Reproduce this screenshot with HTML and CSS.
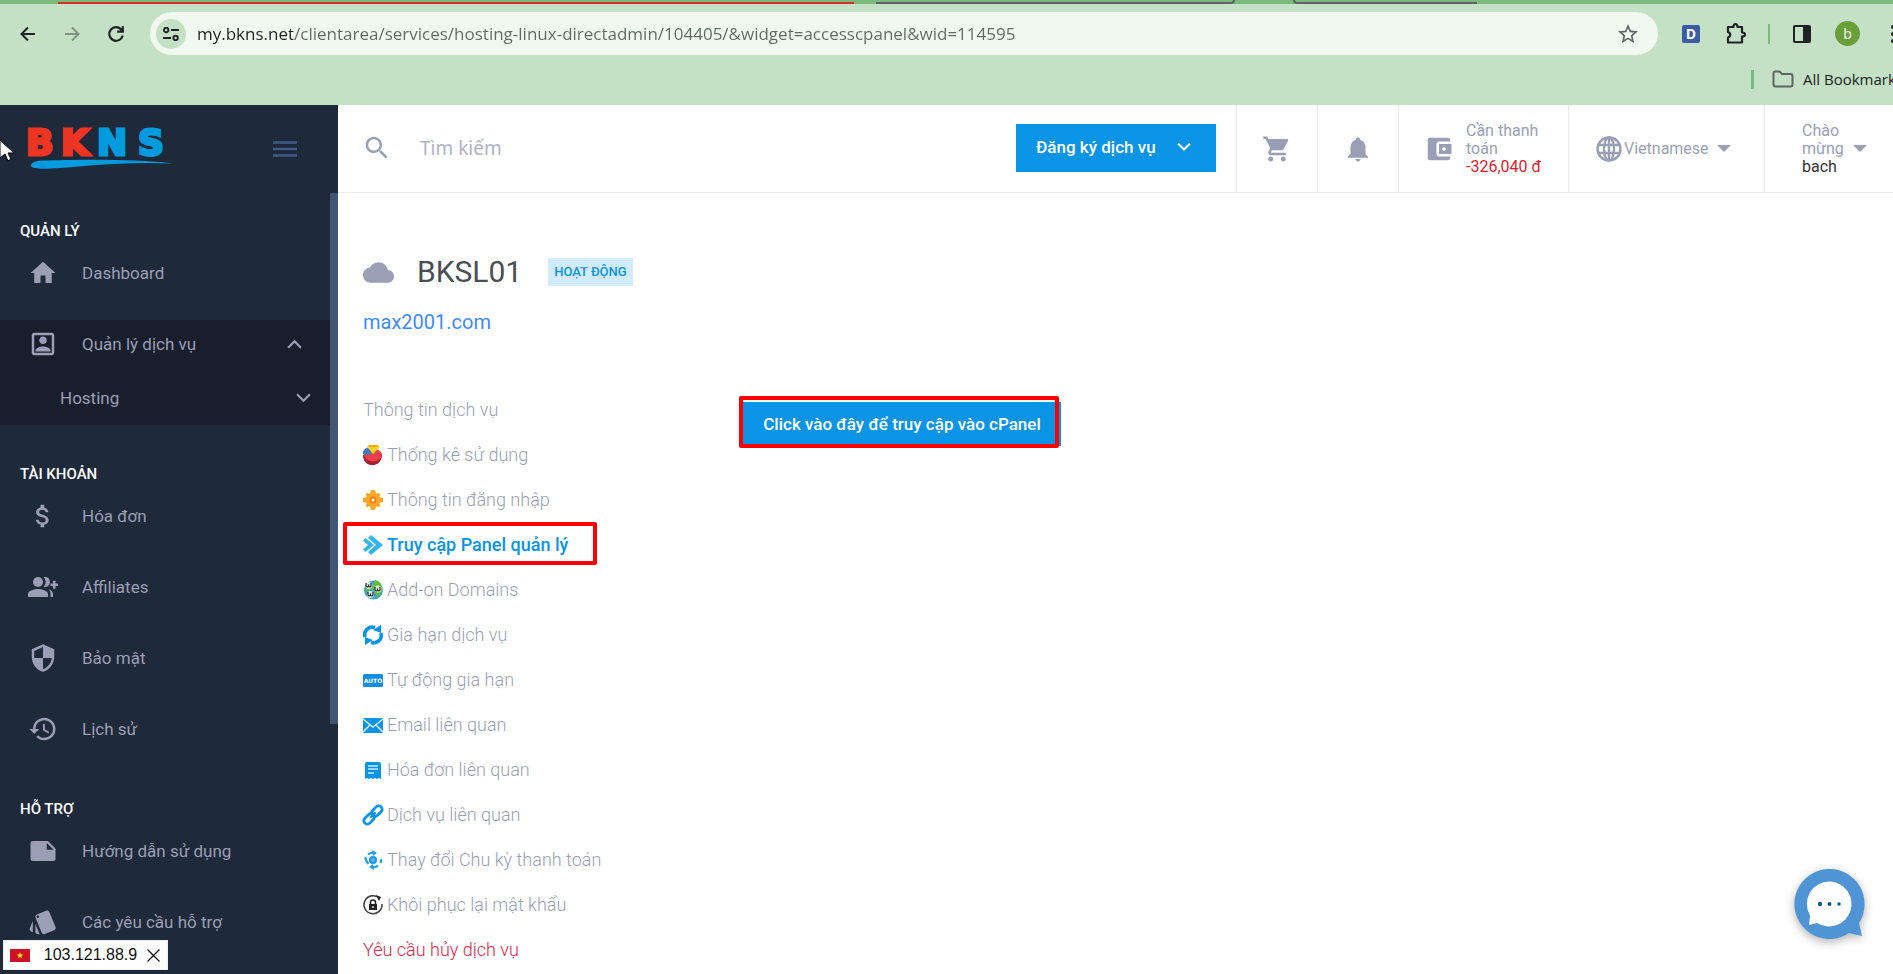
FILE: index.html
```html
<!DOCTYPE html>
<html lang="vi">
<head>
<meta charset="utf-8">
<title>BKNS - BKSL01</title>
<link rel="stylesheet" href="styles.css">
</head>
<body>
<div class="window">
  <div class="browser">
    <div class="tabstrip">
      <span class="group-line"></span>
      <span class="tab-left"></span>
      <span class="tab-right"></span>
    </div>
    <div class="toolbar">
      <button class="nav-btn" aria-label="Back"><svg width="16" height="16" viewBox="0 0 16 16"><path d="M15 8H2M8 1.5 1.5 8 8 14.500" fill="none" stroke="#202124" stroke-width="2"/></svg></button>
      <button class="nav-btn faded" aria-label="Forward"><svg width="16" height="16" viewBox="0 0 16 16"><path d="M1 8h13M8 1.500 14.500 8 8 14.500" fill="none" stroke="#202124" stroke-width="2"/></svg></button>
      <button class="nav-btn" aria-label="Reload"><svg width="18" height="18" viewBox="0 0 18 18"><path d="M14.600 5A6.800 6.800 0 1 0 15.700 10.500M15.800 1v5.600h-5.600" fill="none" stroke="#202124" stroke-width="2.200"/></svg></button>
      <div class="address">
        <button class="site-info" aria-label="Site information"><svg width="16" height="14" viewBox="0 0 16 14"><g fill="none" stroke="#202124" stroke-width="1.900"><circle cx="3.200" cy="3" r="2.200"/><path d="M8 3h8M0 11h8"/><circle cx="12.600" cy="11" r="2.200"/></g></svg></button>
        <input class="url" type="text" aria-label="Address" value="my.bkns.net/clientarea/services/hosting-linux-directadmin/104405/&amp;widget=accesscpanel&amp;wid=114595">
        <button class="star" aria-label="Bookmark"><svg width="24" height="24" viewBox="0 0 24 24"><path fill="#5f6368" d="M22 9.240l-7.190-.62L12 2 9.190 8.630 2 9.240l5.460 4.730L5.820 21 12 17.270 18.180 21l-1.630-7.030L22 9.240zM12 15.400l-3.760 2.270 1-4.280-3.320-2.880 4.380-.38L12 6.100l1.710 4.040 4.380.38-3.320 2.880 1 4.280L12 15.400z"/></svg></button>
      </div>
      <div class="extensions">
        <button class="ext ext-d" aria-label="Extension D">D</button>
        <button class="ext puzzle" aria-label="Extensions"><svg width="24" height="24" viewBox="0 0 24 24"><path d="M4 5h5.500c0-4 4-4 4 0H18v5.500c4 0 4 4 0 4V20.500H4V15.500c3-1 3-4.500 0-5.500z" fill="none" stroke="#202124" stroke-width="2.200" stroke-linejoin="round"/></svg></button>
        <span class="tool-sep"></span>
        <button class="ext panel" aria-label="Side panel"><svg width="18" height="18" viewBox="0 0 18 18"><rect x="1" y="1" width="16" height="16" rx="1" fill="none" stroke="#202124" stroke-width="2"/><path fill="#202124" d="M10 1h7v16h-7z"/></svg></button>
        <button class="ext avatar" aria-label="Profile">b</button>
        <button class="ext kebab" aria-label="Menu"><svg width="6" height="20" viewBox="0 0 6 20"><g fill="#202124"><circle cx="3" cy="3" r="2"/><circle cx="3" cy="10" r="2"/><circle cx="3" cy="17" r="2"/></g></svg></button>
      </div>
    </div>
    <div class="bookmarks">
      <span class="mark-sep"></span>
      <button class="all-marks"><svg width="22" height="18" viewBox="0 0 22 18"><path d="M1.500 3.500q0-2 2-2h4l2.500 2.500h8.500q2 0 2 2v8.500q0 2-2 2h-15q-2 0-2-2z" fill="none" stroke="#5f6368" stroke-width="2"/></svg><span>All Bookmarks</span></button>
    </div>
  </div>

  <div class="app">
    <aside class="sidebar">
      <div class="brand">
        <a href="#" class="logo" aria-label="BKNS"><svg width="148" height="44" viewBox="0 0 148 44"><g class="logo-text"><text class="red" x="-1 34" y="30">BK</text><text class="blue" x="70 111" y="30">NS</text></g><path fill="#009ade" d="M147 38.500C103 33 43 35 15 35.500 7 36 3 38.500 4 41c1 2.500 8 3 20 2.500C53 42 93 36 147 38.500z"/></svg></a>
        <button class="burger" aria-label="Toggle menu"><svg width="24" height="16" viewBox="0 0 24 16"><path d="M0 1.500h24M0 8h24M0 14.500h24" stroke="#415a85" stroke-width="2.600"/></svg></button>
      </div>
      <nav class="side-nav">
        <h2>QUẢN LÝ</h2>
        <a href="#" class="side-item"><svg class="mi" viewBox="0 0 24 24"><path d="M10 20v-6h4v6h5v-8h3L12 3 2 12h3v8z"/></svg><span>Dashboard</span></a>
        <div class="side-open">
          <a href="#" class="side-item"><svg class="mi" viewBox="0 0 24 24"><path d="M19 5v14H5V5h14m0-2H5c-1.100 0-2 .9-2 2v14c0 1.100.9 2 2 2h14c1.100 0 2-.9 2-2V5c0-1.100-.9-2-2-2zm-7 9c1.650 0 3-1.350 3-3s-1.350-3-3-3-3 1.350-3 3 1.350 3 3 3zm6 6H6v-1c0-2 4-3.100 6-3.100s6 1.100 6 3.100v1z"/></svg><span>Quản lý dịch vụ</span><svg class="chev" viewBox="0 0 14 9"><path d="M1 8l6-6 6 6"/></svg></a>
          <a href="#" class="side-sub"><span>Hosting</span><svg class="chev" viewBox="0 0 14 9"><path d="M1 1l6 6 6-6"/></svg></a>
        </div>
        <h2>TÀI KHOẢN</h2>
        <a href="#" class="side-item"><svg class="mi" viewBox="0 0 24 24"><path d="M11.800 10.900c-2.270-.59-3-1.200-3-2.150 0-1.090 1.010-1.850 2.700-1.850 1.780 0 2.440.85 2.500 2.100h2.210c-.07-1.720-1.120-3.300-3.210-3.810V3h-3v2.160c-1.940.42-3.500 1.680-3.500 3.610 0 2.310 1.910 3.460 4.700 4.130 2.500.6 3 1.480 3 2.410 0 .69-.49 1.790-2.700 1.790-2.060 0-2.870-.92-2.980-2.100h-2.200c.12 2.190 1.760 3.420 3.680 3.830V21h3v-2.150c1.950-.37 3.500-1.500 3.500-3.550 0-2.840-2.430-3.810-4.700-4.400z"/></svg><span>Hóa đơn</span></a>
        <a href="#" class="side-item"><svg class="mi" viewBox="0 0 24 24"><circle cx="8" cy="8" r="4"/><path d="M0 20v-2.500c0-2.700 5.300-4 8-4s8 1.300 8 4V20zM12.500 4.200c3.600-.8 5 1.700 5 3.800s-1.400 4.600-5 3.800c2.200-2.300 2.200-5.300 0-7.600zM16.500 13.700c2 .8 3.500 2 3.500 3.800V20h-2v-2.500c0-1.600-.5-2.800-1.500-3.800zM20 7h2v2.200h2v2h-2v2.200h-2v-2.200h-2v-2h2z"/></svg><span>Affiliates</span></a>
        <a href="#" class="side-item"><svg class="mi" viewBox="0 0 24 24"><path d="M12 1L3 5v6c0 5.550 3.840 10.740 9 12 5.160-1.260 9-6.450 9-12V5l-9-4zm0 10.990h7c-.53 4.120-3.280 7.790-7 8.940V12H5V6.300l7-3.110v8.800z"/></svg><span>Bảo mật</span></a>
        <a href="#" class="side-item"><svg class="mi" viewBox="0 0 24 24"><path d="M13 3c-4.970 0-9 4.030-9 9H1l3.890 3.890.07.140L9 12H6c0-3.870 3.130-7 7-7s7 3.130 7 7-3.130 7-7 7c-1.930 0-3.680-.79-4.940-2.060l-1.420 1.420C8.270 19.990 10.510 21 13 21c4.970 0 9-4.030 9-9s-4.030-9-9-9zm-1 5v5l4.280 2.540.72-1.210-3.500-2.080V8H12z"/></svg><span>Lịch sử</span></a>
        <h2>HỖ TRỢ</h2>
        <a href="#" class="side-item"><svg class="mi" viewBox="0 0 24 24"><path d="M4 4h12l6 6v8q0 2-2 2H4q-2 0-2-2V6q0-2 2-2zm11 1.500V11h5.500z" fill-rule="evenodd"/></svg><span>Hướng dẫn sử dụng</span></a>
        <a href="#" class="side-item"><svg class="mi" viewBox="0 0 24 24"><path d="M2.530 19.650l1.340.56v-9.030l-2.430 5.860c-.41 1.020.08 2.190 1.090 2.610zm19.500-3.700L17.070 3.980c-.31-.75-1.040-1.210-1.810-1.230-.26 0-.53.04-.79.15L7.100 5.950c-.75.31-1.210 1.030-1.230 1.800-.01.27.04.54.15.8l4.960 11.970c.31.76 1.050 1.220 1.830 1.230.26 0 .52-.05.77-.15l7.360-3.050c1.020-.42 1.510-1.590 1.090-2.600zM7.880 8.750c-.55 0-1-.45-1-1s.45-1 1-1 1 .45 1 1-.45 1-1 1zm-2 11c0 1.100.9 2 2 2h1.450l-3.450-8.340v6.340z"/></svg><span>Các yêu cầu hỗ trợ</span></a>
        <span class="scroll-thumb"></span>
      </nav>
    </aside>

    <div class="content">
      <header class="topbar">
        <label class="search"><svg width="30" height="30" viewBox="0 0 24 24"><path fill="#9a9fb5" d="M15.500 14h-.79l-.28-.27C15.410 12.590 16 11.110 16 9.500 16 5.910 13.090 3 9.500 3S3 5.910 3 9.500 5.910 16 9.500 16c1.610 0 3.090-.59 4.230-1.570l.27.28v.79l5 4.990L20.490 19l-4.990-5zm-6 0C7.010 14 5 11.990 5 9.500S7.010 5 9.500 5 14 7.010 14 9.500 11.990 14 9.500 14z"/></svg><input type="search" placeholder="Tìm kiếm" aria-label="Tìm kiếm"></label>
        <div class="order-cell"><button class="btn order"><span>Đăng ký dịch vụ</span><svg class="chev" viewBox="0 0 14 9"><path d="M1 1l6 6 6-6"/></svg></button></div>
        <button class="cell icon-cell" aria-label="Giỏ hàng"><svg class="mi" viewBox="0 0 24 24"><path d="M7 18c-1.100 0-1.990.9-1.990 2S5.900 22 7 22s2-.9 2-2-.9-2-2-2zM1 2v2h2l3.600 7.590-1.350 2.450c-.16.28-.25.61-.25.96 0 1.100.9 2 2 2h12v-2H7.420c-.14 0-.25-.11-.25-.25l.03-.12.9-1.630h7.450c.75 0 1.410-.41 1.750-1.030l3.580-6.490c.08-.14.12-.31.12-.48 0-.55-.45-1-1-1H5.210l-.94-2H1zm16 16c-1.100 0-1.990.9-1.990 2s.89 2 1.990 2 2-.9 2-2-.9-2-2-2z"/></svg></button>
        <button class="cell icon-cell" aria-label="Thông báo"><svg class="mi" viewBox="0 0 24 24"><path d="M12 22c1.100 0 2-.9 2-2h-4c0 1.100.89 2 2 2zm6-6v-5c0-3.070-1.640-5.640-4.500-6.320V4c0-.83-.67-1.500-1.500-1.500s-1.500.67-1.500 1.500v.68C7.630 5.360 6 7.920 6 11v5l-2 2v1h16v-1l-2-2z"/></svg></button>
        <a href="#" class="cell due"><svg class="mi" viewBox="0 0 24 24"><path d="M21 18v1c0 1.100-.9 2-2 2H5c-1.110 0-2-.9-2-2V5c0-1.100.89-2 2-2h14c1.100 0 2 .9 2 2v1h-9c-1.110 0-2 .9-2 2v8c0 1.100.89 2 2 2h9zm-9-2h10V8H12v8zm4-2.500c-.83 0-1.500-.67-1.500-1.500s.67-1.500 1.500-1.500 1.500.67 1.500 1.500-.67 1.500-1.500 1.500z"/></svg><span>Cần thanh<br>toán<br><b>-326,040 đ</b></span></a>
        <label class="cell lang"><svg width="26" height="26" viewBox="0 0 26 26"><g fill="none" stroke="#9a9fb5" stroke-width="2.400"><circle cx="13" cy="13" r="11.500"/><ellipse cx="13" cy="13" rx="5" ry="11.500"/><path d="M2 9h22M2 17h22M13 2v22"/></g></svg><select aria-label="Ngôn ngữ"><option>Vietnamese</option></select><i class="caret"></i></label>
        <button class="cell user"><span>Chào<br>mừng<br><b>bach</b></span><i class="caret"></i></button>
      </header>

      <main class="main">
        <div class="title-row">
          <svg class="cloud" width="31" height="31" viewBox="0 0 24 24"><path fill="#9a9fb5" d="M19.350 10.040C18.670 6.590 15.640 4 12 4 9.110 4 6.600 5.640 5.350 8.040 2.340 8.360 0 10.910 0 14c0 3.310 2.690 6 6 6h13c2.760 0 5-2.240 5-5 0-2.640-2.050-4.780-4.650-4.960z"/></svg>
          <h1>BKSL01</h1>
          <span class="badge">HOẠT ĐỘNG</span>
        </div>
        <a href="#" class="domain">max2001.com</a>
        <div class="columns">
          <nav class="service-nav">
            <a href="#">Thông tin dịch vụ</a>
            <a href="#"><svg viewBox="0 0 20 20"><path fill="#a81f2c" d="M0 10c0 14 19 13 19 0z"/><ellipse cx="10" cy="10" rx="9" ry="6.500" fill="#e8414b"/><path fill="#4378bd" d="M0 9V7c1-3 3-4 5-4.500L10 8l-6 2z"/><path fill="#ffd21f" d="M4 1.500C7-.5 13-.5 17 2l-7 7z"/><path fill="#f4a800" d="M6 0h9v2H6z"/></svg><span>Thống kê sử dụng</span></a>
            <a href="#"><svg viewBox="0 0 20 20"><g fill="#fba826"><circle cx="10" cy="10" r="7.500"/><path d="M8 0h4l1 4H7zM8 20h4l1-4H7zM0 8v4l4 1V7zM20 8v4l-4 1V7zM2.500 4.500l2-2 4 3-3 3zM17.500 4.500l-2-2-4 3 3 3zM2.500 15.500l2 2 4-3-3-3zM17.500 15.500l-2 2-4-3 3-3z"/></g><circle cx="10" cy="10" r="3.500" fill="#f27c1c"/><circle cx="10" cy="10" r="1.500" fill="#fff"/></svg><span>Thông tin đăng nhập</span></a>
            <a href="#" class="current"><svg viewBox="0 0 20 20"><g fill="#35b6ea"><path d="M5 3l3-3 12 10L8 20l-3-3 8-7z"/><path d="M0 5.500l2.500-2.500L11 10l-8.500 7L0 14.500 5 10z"/></g></svg><span>Truy cập Panel quản lý</span></a>
            <a href="#"><svg viewBox="0 0 20 20"><circle cx="10.500" cy="10" r="9.500" fill="#3ba3d0"/><path fill="#63bd35" d="M12 0c5 1 8 5 7 11l-5 7-2-6-3-3zM2 6l4-4 2 6-3 6z"/><g fill="#fff" opacity=".75"><circle cx="6" cy="5.500" r="3.500"/><circle cx="15" cy="9" r="3.500"/><circle cx="7.500" cy="14.500" r="3.500"/></g><g fill="none" stroke="#222" stroke-width="1.200"><path d="M3 3v3q1.500 2 2.500 0V4.500V6q1.500 2 2.500 0V3M12 7v3q1.500 2 2.500 0V8.500V10q1.500 2 2.500 0V7M5 12v3q1.500 2 2.500 0v-1.500V15q1.500 2 2.500 0v-3"/></g></svg><span>Add-on Domains</span></a>
            <a href="#"><svg viewBox="0 0 20 20"><g fill="none" stroke="#0994e6" stroke-width="3.600"><path d="M2 12C.5 5 6 1 12 2.500"/><path d="M18 8C19.500 15 14 19 8 17.500"/></g><path fill="#0994e6" d="M10 5l8-5v8zM10 15l-8 5v-8z"/></svg><span>Gia hạn dịch vụ</span></a>
            <a href="#"><svg viewBox="0 0 20 20"><rect y="4" width="20" height="13" rx="1.500" fill="#0d8de3"/><text x="10" y="13" text-anchor="middle" class="auto-text">AUTO</text></svg><span>Tự động gia hạn</span></a>
            <a href="#"><svg viewBox="0 0 20 20"><rect y="3" width="20" height="15" rx="1" fill="#0994e6"/><path d="M0 4l10 8 10-8M0 17l7-7M20 17l-7-7" fill="none" stroke="#d9f1ff" stroke-width="1.500"/></svg><span>Email liên quan</span></a>
            <a href="#"><svg viewBox="0 0 20 20"><path fill="#0994e6" d="M4 2h12q2 0 2 2v15l-2-1-2 1-2-1-2 1-2-1-2 1-2-1-2 1V4q0-2 2-2z"/><path d="M5 6h10M5 9h10M5 13h6" stroke="#c9eaff" stroke-width="1.500"/></svg><span>Hóa đơn liên quan</span></a>
            <a href="#"><svg viewBox="0 0 20 20"><g fill="none" stroke="#0994e6" stroke-width="2.800" transform="rotate(-45 10 10)"><rect x="-1.500" y="6.500" width="12" height="7" rx="3.500"/><rect x="9.500" y="6.500" width="12" height="7" rx="3.500"/><path d="M6 10h8" stroke-width="2"/></g></svg><span>Dịch vụ liên quan</span></a>
            <a href="#"><svg viewBox="0 0 20 20"><circle cx="10" cy="10" r="4" fill="#1495e0"/><circle cx="10" cy="10" r="2" fill="#5bb8ee"/><g fill="none" stroke="#21a0e8" stroke-width="2.200"><path d="M5 4.500q2-2 6-2M2.500 7q0 4 3 7M15 15.500q-2 2-6 2M17.500 13q1-2 .5-4"/></g><path fill="#21a0e8" d="M9 0l5 3-4 3zM11 20l-5-3 4-3z"/></svg><span>Thay đổi Chu kỳ thanh toán</span></a>
            <a href="#"><svg viewBox="0 0 20 20"><path d="M16 3A9 9 0 1 0 19 9" fill="none" stroke="#444" stroke-width="1.600"/><path fill="#222" d="M13 0l5 2-2 4zM6 9h8v6H6z"/><path d="M7.500 9V7.500a2.500 2.500 0 0 1 5 0V9" fill="none" stroke="#222" stroke-width="1.500"/><circle cx="10" cy="12" r="1" fill="#ddd"/></svg><span>Khôi phục lại mật khẩu</span></a>
            <a href="#" class="danger">Yêu cầu hủy dịch vụ</a>
          </nav>
          <section class="panel-body">
            <button class="btn access">Click vào đây để truy cập vào cPanel</button>
          </section>
        </div>
      </main>
    </div>
  </div>

  <div class="ip-box"><svg width="20" height="13" viewBox="0 0 20 13"><path fill="#cf1126" d="M0 0h20v13H0z"/><path fill="#ffde17" d="M10 3l.9 2.400h2.600l-2.100 1.600.8 2.600-2.200-1.500-2.200 1.500.8-2.600-2.100-1.600h2.600z"/></svg><span>103.121.88.9</span><button aria-label="Đóng"><svg width="13" height="13" viewBox="0 0 13 13"><path d="M.5.5l12 12M12.500.5l-12 12" stroke="#111" stroke-width="1.300"/></svg></button></div>
  <button class="chat" aria-label="Chat"><svg width="72" height="72" viewBox="0 0 72 72"><path fill="#4f94d5" d="M35 0a35 35 0 0 1 30 54l3 13-13-3A35 35 0 1 1 35 0z"/><path fill="#fff" d="M36 12.500a22.500 22.500 0 1 1-13 41.500l-8 2 1-9.500A22.500 22.500 0 0 1 36 12.500z"/><g fill="#145a8d"><circle cx="26" cy="35" r="2.200"/><circle cx="35.500" cy="35" r="2"/><circle cx="45" cy="35" r="1.800"/></g></svg></button>
  <svg class="pointer" width="15" height="24" viewBox="0 0 15 24"><path d="M0 1l14 13H8l3 6-3 2-3-7-5 4z" fill="#fff" stroke="#000"/></svg>
</div>
</body>
</html>
```
FILE: styles.css
```css
*, *::after { box-sizing: border-box; }
body { margin: 0; font-family: Roboto, sans-serif; background: #fff; color: #9a9fb5; }
button { border: 0; background: none; padding: 0; font: inherit; color: inherit; cursor: pointer; }
a { text-decoration: none; color: inherit; }
svg { display: block; flex: none; }
.window { position: relative; height: 100vh; overflow: hidden; display: flex; flex-direction: column; }

/* Browser chrome */
.browser { background: #c5e1c5; height: 105px; flex: none; font-family: "Open Sans", sans-serif; }
.tabstrip { height: 4px; background: #7abb7d; display: flex; align-items: flex-end; }
.group-line { margin-left: 58px; width: 796px; height: 2px; background: #d93025; }
.tab-left { margin-left: 22px; width: 359px; height: 4px; border: solid #5f6368; border-width: 0 2px 2px 0; border-bottom-right-radius: 6px; }
.tab-right { margin-left: 58px; width: 184px; height: 4px; border: solid #5f6368; border-width: 0 0 2px 2px; border-bottom-left-radius: 6px; }
.toolbar { display: flex; align-items: center; height: 59px; padding-left: 6px; }
.nav-btn { width: 44px; height: 44px; display: grid; place-items: center; }
.faded { opacity: .4; }
.address { flex: 1; height: 43px; margin-left: 12px; border-radius: 22px; background: #f0f8f0; display: flex; align-items: center; padding: 0 18px 0 6px; }
.site-info { width: 30px; height: 30px; border-radius: 50%; background: #c5e1c5; display: grid; place-items: center; }
.url { flex: 1; border: 0; padding: 0; margin: 0 11px; outline: 0; font: 17px "Open Sans", sans-serif; color: transparent; background: linear-gradient(90deg, #202124 96px, #5f6b62 96px); background-clip: text; -webkit-background-clip: text; }
.extensions { width: 235px; flex: none; display: flex; align-items: center; overflow: hidden; padding-left: 24px; }
.ext { flex: none; display: grid; place-items: center; }
.ext-d { width: 18px; height: 18px; background: #3b5ba5; color: #fff; border-radius: 2px; font-size: 14px; line-height: 18px; font-weight: 700; }
.puzzle { margin-left: 24px; }
.tool-sep { width: 2px; height: 20px; background: #7abb7d; margin: 0 23px 0 20px; flex: none; }
.avatar { width: 25px; height: 25px; margin: 0 30px 0 24px; border-radius: 50%; background: #689f38; color: #fff; font-size: 14px; }
.bookmarks { height: 32px; display: flex; align-items: center; justify-content: flex-end; overflow: hidden; }
.mark-sep { width: 3px; height: 19px; background: #7abb7d; margin-right: 18px; flex: none; }
.all-marks { display: flex; align-items: center; gap: 9px; width: 121px; flex: none; font-size: 15px; font-weight: 500; color: #202124; white-space: nowrap; }

/* Page shell */
.app { flex: 1; min-height: 0; display: flex; }
.sidebar { width: 338px; flex: none; background: #1e2939; overflow: hidden; }
.brand { height: 88px; display: flex; align-items: flex-start; justify-content: space-between; padding: 20px 41px 0 27px; }
.logo svg { overflow: visible; }
.logo-text { font: bold 36px "DejaVu Sans", sans-serif; stroke-width: 3px; }
.red { fill: #ee3524; stroke: #ee3524; }
.blue { fill: #009ade; stroke: #009ade; }
.burger { margin-top: 16px; }
.side-nav { position: relative; padding-top: 5px; font-size: 17px; }
.side-nav h2 { margin: 0 0 8px; padding: 23px 20px 0; font-size: 15px; line-height: 20px; font-weight: 500; color: #fff; }
.side-item { display: flex; align-items: center; height: 71px; padding: 0 36px 23px 28px; }
.side-item span, .side-sub span { flex: 1; }
.side-item span { margin-left: 24px; }
.mi { width: 30px; height: 30px; fill: #9a9fb5; }
.side-open { background: #181e2b; margin-bottom: 16px; }
.side-sub { display: flex; align-items: center; height: 34px; padding: 0 27px 20px 60px; }
.chev { width: 15px; height: 10px; fill: none; stroke: #9a9fb5; stroke-width: 2; }
.scroll-thumb { position: absolute; top: 0; right: 0; width: 8px; height: 531px; background: #3f5573; }
.content { flex: 1; min-width: 0; }

/* Top bar */
.topbar { height: 88px; border-bottom: 1px solid #e9e9ef; display: flex; align-items: stretch; }
.search { flex: 1; display: flex; align-items: center; padding: 0 0 2px 24px; gap: 28px; }
.search input { flex: 1; min-width: 0; border: 0; outline: 0; padding: 0; font: 19px "Noto Sans", sans-serif; color: #555; }
.search input::placeholder { color: #afb3c4; opacity: 1; }
.order-cell { display: flex; align-items: center; padding: 0 20px 2px 0; }
.btn { background: #0994e6; color: #fff; font-size: 17px; font-weight: 500; white-space: nowrap; }
.order { width: 200px; height: 48px; display: flex; align-items: center; justify-content: space-between; padding: 0 25px 2px 20px; }
.btn .chev { width: 14px; stroke: #fff; }
.cell { border-left: 1px solid #e9e9ef; display: flex; align-items: center; font-size: 16px; line-height: 18px; flex: none; text-align: left; }
.icon-cell { width: 81px; justify-content: center; }
.due { width: 170px; padding-left: 25px; gap: 12px; }
.cell b { font-weight: 400; color: #333; }
.due b { color: #e01b2f; }
.lang { width: 196px; padding-left: 27px; }
.lang select { appearance: none; border: 0; background: none; padding: 0; margin-left: 2px; font: inherit; color: inherit; width: 93px; }
.user { width: 129px; padding-left: 37px; gap: 9px; }
.caret { border: 7px solid transparent; border-top-color: #9a9fb5; border-bottom: 0; }

/* Service page */
.main { padding: 60px 24px 0 25px; }
.title-row { display: flex; align-items: center; height: 38px; }
h1 { margin: 0 26px 0 23px; font-size: 30px; line-height: 38px; font-weight: 400; color: #4b4f55; }
.badge { background: #d2ecff; color: #0994e6; font-size: 13px; font-weight: 500; line-height: 28px; padding: 0 6px; }
.domain { display: block; margin-top: 19px; font-size: 20px; line-height: 24px; color: #3d8bfd; }
.columns { display: flex; margin-top: 53px; }
.service-nav { width: 380px; flex: none; font-size: 18px; font-weight: 300; }
.service-nav a { display: flex; align-items: center; gap: 4px; height: 45px; position: relative; }
.service-nav svg { width: 20px; height: 20px; overflow: visible; }
.service-nav .current { color: #0994e6; font-weight: 500; }
.current::after { content: ""; position: absolute; left: -20px; top: 0; width: 254px; height: 43px; border: 4px solid #f00; border-radius: 2px; }
.service-nav .danger { color: #dc2645; }
.auto-text { font: bold 6px "DejaVu Sans", sans-serif; fill: #fff; }
.panel-body { padding-top: 15px; }
.access { position: relative; width: 318px; height: 44px; }
.access::after { content: ""; position: absolute; left: -4px; top: -6px; right: 2px; bottom: -2px; border: 4px solid #f00; border-radius: 2px; }

/* Floating items */
.ip-box { position: absolute; left: 3px; bottom: 4px; width: 165px; height: 30px; background: #fff; border: 1px solid #eee; display: flex; align-items: center; justify-content: space-between; padding: 0 7px 0 6px; font: 16px "Liberation Sans", sans-serif; color: #111; }
.ip-box span { margin-left: 4px; }
.chat { position: absolute; right: 27px; bottom: 33px; filter: drop-shadow(0 3px 5px rgba(0, 0, 0, .3)); }
.pointer { position: absolute; left: 0; top: 139px; }
```
